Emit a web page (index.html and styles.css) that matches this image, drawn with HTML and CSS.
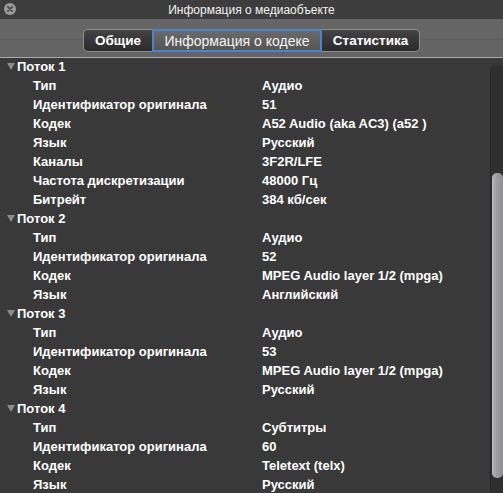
FILE: index.html
```html
<!DOCTYPE html>
<html lang="ru">
<head>
<meta charset="utf-8">
<title>Информация о медиаобъекте</title>
<link rel="stylesheet" href="styles.css">
</head>
<body>
<div class="window">
  <header class="titlebar">
    <span class="close">
      <svg width="12" height="12" viewBox="0 0 12 12"><circle cx="6" cy="6" r="6" fill="#9b9b9b"/><path d="M3.8 3.8 L8.2 8.2 M8.2 3.8 L3.8 8.2" stroke="#3e3e3e" stroke-width="1.6" stroke-linecap="round"/></svg>
    </span>
    <span class="title">Информация о медиаобъекте</span>
  </header>
  <div class="toolbar">
    <div class="segmented">
      <span class="seg seg-first">Общие</span>
      <span class="seg seg-active">Информация о кодеке</span>
      <span class="seg seg-last">Статистика</span>
    </div>
  </div>
  <div class="content">
    <div class="outline">
      <div class="row group"><span class="tri"></span>Поток 1</div>
      <div class="row"><span class="key">Тип</span><span class="val">Аудио</span></div>
      <div class="row"><span class="key">Идентификатор оригинала</span><span class="val">51</span></div>
      <div class="row"><span class="key">Кодек</span><span class="val">A52 Audio (aka AC3) (a52 )</span></div>
      <div class="row"><span class="key">Язык</span><span class="val">Русский</span></div>
      <div class="row"><span class="key">Каналы</span><span class="val">3F2R/LFE</span></div>
      <div class="row"><span class="key">Частота дискретизации</span><span class="val">48000 Гц</span></div>
      <div class="row"><span class="key">Битрейт</span><span class="val">384 кб/сек</span></div>
      <div class="row group"><span class="tri"></span>Поток 2</div>
      <div class="row"><span class="key">Тип</span><span class="val">Аудио</span></div>
      <div class="row"><span class="key">Идентификатор оригинала</span><span class="val">52</span></div>
      <div class="row"><span class="key">Кодек</span><span class="val">MPEG Audio layer 1/2 (mpga)</span></div>
      <div class="row"><span class="key">Язык</span><span class="val">Английский</span></div>
      <div class="row group"><span class="tri"></span>Поток 3</div>
      <div class="row"><span class="key">Тип</span><span class="val">Аудио</span></div>
      <div class="row"><span class="key">Идентификатор оригинала</span><span class="val">53</span></div>
      <div class="row"><span class="key">Кодек</span><span class="val">MPEG Audio layer 1/2 (mpga)</span></div>
      <div class="row"><span class="key">Язык</span><span class="val">Русский</span></div>
      <div class="row group"><span class="tri"></span>Поток 4</div>
      <div class="row"><span class="key">Тип</span><span class="val">Субтитры</span></div>
      <div class="row"><span class="key">Идентификатор оригинала</span><span class="val">60</span></div>
      <div class="row"><span class="key">Кодек</span><span class="val">Teletext (telx)</span></div>
      <div class="row"><span class="key">Язык</span><span class="val">Русский</span></div>
    </div>
    <div class="scrolltrack"><div class="thumb"></div></div>
  </div>
</div>
</body>
</html>
```

FILE: styles.css
```css
* { box-sizing: border-box; }
html, body {
  margin: 0;
  padding: 0;
  background: #393939;
}
body {
  font-family: "Liberation Sans", Arial, sans-serif;
  color: #fff;
}
.window {
  width: 503px;
  height: 493px;
  display: flex;
  flex-direction: column;
  overflow: hidden;
}
.titlebar {
  height: 19px;
  background: #3d3d3d;
  display: flex;
  align-items: center;
  justify-content: center;
  position: relative;
}
.close {
  position: absolute;
  left: 4px;
  top: 3px;
  width: 12px;
  height: 12px;
  display: block;
}
.close svg { display: block; }
.title {
  font-size: 12px;
  color: #f2f2f2;
}
.toolbar {
  height: 39px;
  background: linear-gradient(to bottom, #656565 0, #656565 20px, #5d5d5d 20px, #5d5d5d 21px, #646464 21px);
  border-bottom: 1px solid #a9a9a9;
  display: flex;
  justify-content: center;
  padding-top: 10px;
}
.segmented {
  display: flex;
  height: 23px;
}
.seg {
  display: flex;
  align-items: center;
  justify-content: center;
  font-size: 13.5px;
  font-weight: bold;
  color: #fff;
  padding: 0;
  background: linear-gradient(to bottom, #434343, #2b2b2b);
  border-top: 1px solid #8e8e8e;
  border-bottom: 1px solid #8e8e8e;
}
.seg-first {
  border-left: 1px solid #8e8e8e;
  border-radius: 5px 0 0 5px;
  width: 69px;
}
.seg-last {
  border-right: 1px solid #8e8e8e;
  border-radius: 0 5px 5px 0;
  width: 98px;
}
.seg-active {
  width: 170px;
  font-size: 14px;
  font-weight: normal;
  color: #f4f4f4;
  background: linear-gradient(to bottom, #6a6a6a, #555555);
  border: 2px solid #4a84cc;
}
.content {
  flex: 1;
  position: relative;
  background: #393939;
  overflow: hidden;
}
.outline {
  margin-top: -1px;
}
.row {
  height: 19px;
  line-height: 19px;
  font-size: 13px;
  font-weight: bold;
  display: flex;
  white-space: nowrap;
}
.group {
  padding-left: 7px;
  align-items: center;
}
.tri {
  width: 0;
  height: 0;
  border-left: 4.5px solid transparent;
  border-right: 4.5px solid transparent;
  border-top: 7px solid #8c8c8c;
  margin-right: 2px;
}
.key {
  width: 262px;
  padding-left: 33px;
}
.val {
  flex: 1;
}
.scrolltrack {
  position: absolute;
  right: 0;
  top: 7px;
  bottom: 0;
  width: 13px;
  background: #2f2f2f;
  border-left: 1px solid #262626;
  border-radius: 6px 0 0 0;
}
.thumb {
  position: absolute;
  left: 1px;
  right: 0;
  top: 108px;
  height: 305px;
  border-radius: 5px;
  background: linear-gradient(to right, #b8b8bd, #9d9da3 40%, #8e8e94);
}
```
